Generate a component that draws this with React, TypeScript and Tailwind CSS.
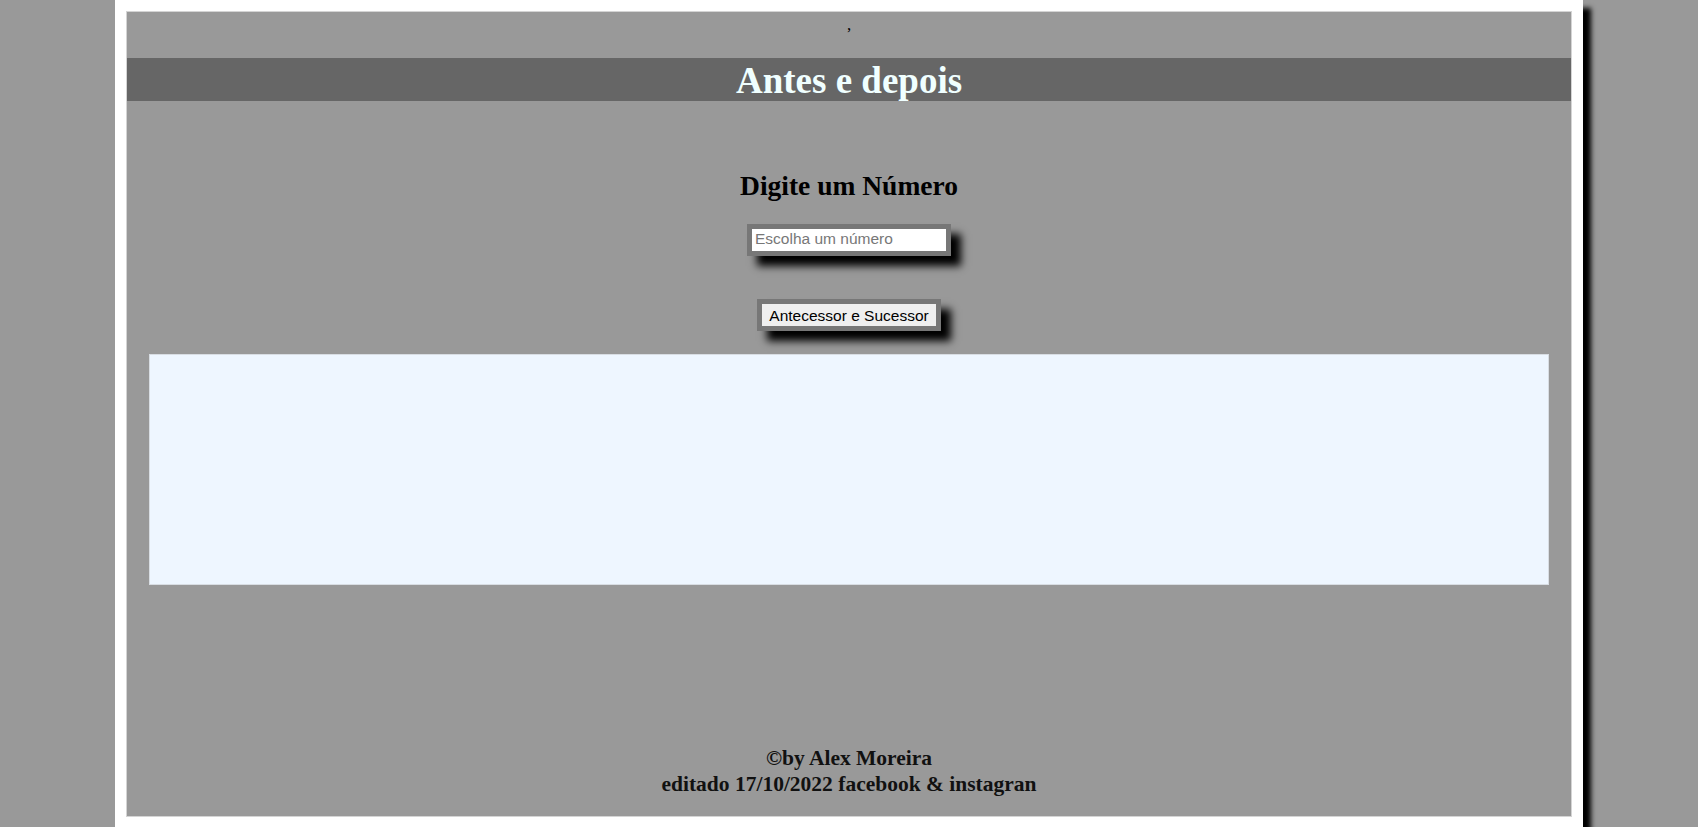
export default function App() {
  return (
    <div className="min-h-[827px] bg-[#999999] font-['Liberation_Serif',serif]">
      <div className="mx-auto w-[1468px] bg-white px-[11px] pt-[11px] pb-[11px] shadow-[8px_8px_5px_#000]">
        <div className="flex h-[806px] flex-col border border-[#d4d4d4] bg-[#999999]">
          <div className="flex h-[46px] justify-center pt-[4px] text-[17px] leading-none text-black">,</div>
          <h1 className="flex h-[43px] items-center justify-center bg-[#666666] pt-[2px] text-[37px] font-bold leading-none text-[#f0ffff]">
            Antes e depois
          </h1>
          <h2 className="mt-[69px] text-center text-[27.5px] font-bold leading-[32px] text-black">Digite um Número</h2>
          <div className="mt-[22px] flex justify-center">
            <input
              type="number"
              placeholder="Escolha um número"
              className="h-[32px] w-[204px] border-[5px] border-[#777777] bg-white px-[3px] pb-[2px] font-['Liberation_Sans',sans-serif] text-[15.5px] text-black shadow-[10px_10px_8px_#000] outline-none placeholder:text-[#777777]"
            />
          </div>
          <div className="mt-[43px] flex justify-center">
            <button className="h-[32px] w-[184px] border-[5px] border-[#777777] bg-[#efefef] font-['Liberation_Sans',sans-serif] text-[15.5px] text-black shadow-[10px_10px_8px_#000]">
              Antecessor e Sucessor
            </button>
          </div>
          <div className="mx-[22px] mt-[23px] h-[231px] border border-[#d8dde3] bg-[#eef6ff]" />
          <div className="mt-auto mb-[19px] text-center text-[21.5px] font-bold leading-[26px] text-[#111]">
            <p>©by Alex Moreira</p>
            <p>editado 17/10/2022 facebook &amp; instagran</p>
          </div>
        </div>
      </div>
    </div>
  )
}
